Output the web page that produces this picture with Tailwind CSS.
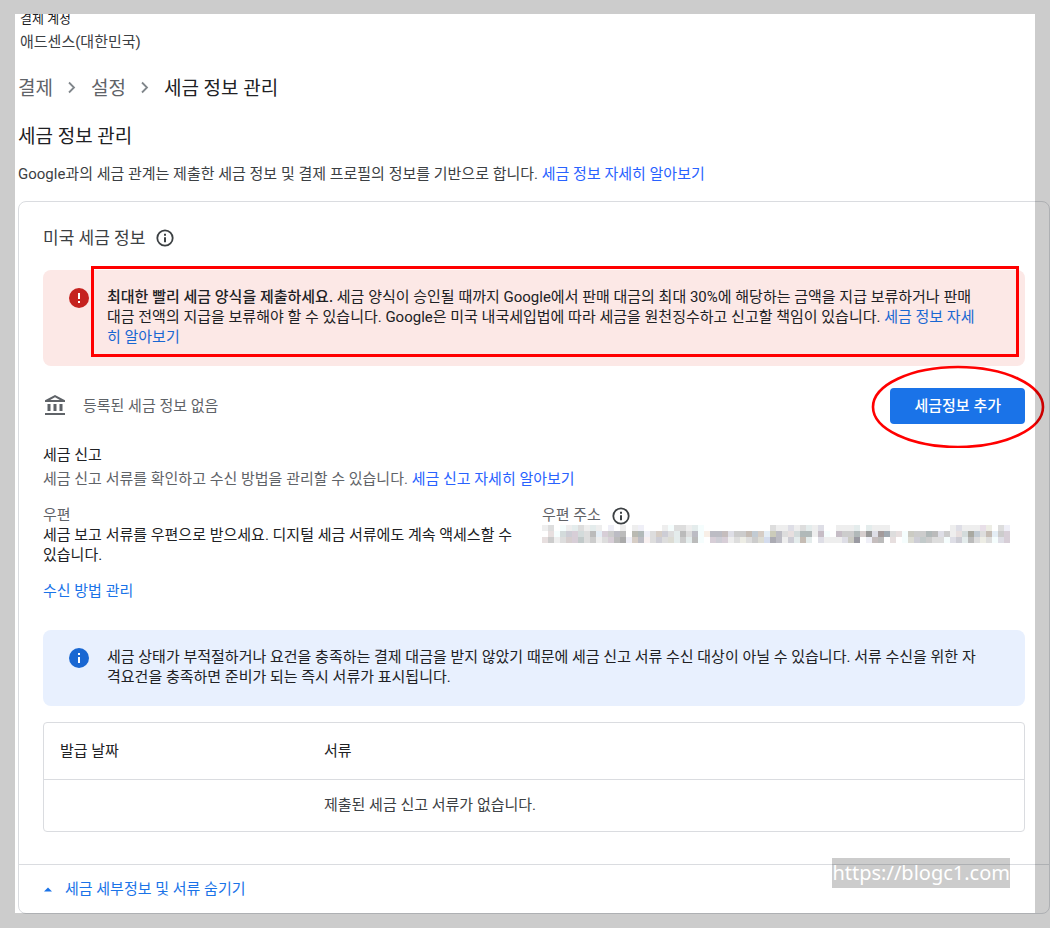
<!DOCTYPE html>
<html lang="ko">

<head>
  <meta charset="UTF-8" />
  <meta name="viewport" content="width=device-width, initial-scale=1.0" />
  <title>세금 정보 관리</title>
  <script src="https://cdn.jsdelivr.net/npm/@tailwindcss/browser@4"></script>
</head>

<body class="bg-white font-['Roboto','Noto_Sans_CJK_KR',sans-serif] text-[15px] leading-5 text-[#202124]">
  <div class="relative min-h-screen overflow-hidden pt-[14px] pb-[14px] pl-[18px]">

    <header class="overflow-hidden pl-[2px]">
      <p class="-mt-[5px] text-[13px]">결제 계정</p>
      <p class="mt-[3px] text-[#3c4043]">애드센스(대한민국)</p>
    </header>

    <nav aria-label="탐색경로" class="mt-[23px] flex items-center text-[19px] leading-7 text-[#5f6368]">
      <a href="#">결제</a>
      <svg class="mx-[7px] size-6" viewBox="0 0 24 24" fill="none" stroke="#80868b" stroke-width="1.8"><path d="M9 5.5l5 5-5 5" /></svg>
      <a href="#">설정</a>
      <svg class="mx-[7px] size-6" viewBox="0 0 24 24" fill="none" stroke="#80868b" stroke-width="1.8"><path d="M9 5.5l5 5-5 5" /></svg>
      <span class="text-[#202124]">세금 정보 관리</span>
    </nav>

    <h1 class="mt-5 text-[19px] leading-7">세금 정보 관리</h1>
    <p class="mt-[13px] text-[#3c4043]">Google과의 세금 관계는 제출한 세금 정보 및 결제 프로필의 정보를 기반으로 합니다. <a href="#" class="text-[#2962ff]">세금 정보 자세히 알아보기</a></p>

    <main class="mt-[17px] rounded-lg border border-[#dadce0]">
      <div class="px-6 pt-6">
        <div class="flex items-center gap-2">
          <h2 class="text-[17px] leading-6 text-[#3c4043]">미국 세금 정보</h2>
          <svg class="size-6" viewBox="0 0 24 24" fill="none"><circle cx="12" cy="12" r="7.7" stroke="#3c4043" stroke-width="1.8" /><path d="M11 7.8h2v2h-2zM11 11.2h2v5h-2z" fill="#3c4043" /></svg>
        </div>

        <div role="alert" class="relative mt-5 flex gap-4 rounded-lg bg-[#fce8e6] pt-4 pr-10 pb-[19px] pl-6">
          <svg class="size-6 shrink-0" viewBox="0 0 24 24"><circle cx="12" cy="12" r="10" fill="#c5221f" /><path d="M11 7h2v6h-2zM11 15h2v2h-2z" fill="#fff" /></svg>
          <p class="pt-px"><strong class="font-medium">최대한 빨리 세금 양식을 제출하세요.</strong> 세금 양식이 승인될 때까지 Google에서 판매 대금의 최대 30%에 해당하는 금액을 지급 보류하거나 판매 대금 전액의 지급을 보류해야 할 수 있습니다. Google은 미국 내국세입법에 따라 세금을 원천징수하고 신고할 책임이 있습니다. <a href="#" class="text-[#1967d2]">세금 정보 자세히 알아보기</a></p>
          <div class="absolute -top-1 right-[6px] bottom-[9px] left-12 border-3 border-[#ff0000]"></div>
        </div>

        <div class="mt-[22px] flex items-center gap-4 text-[#5f6368]">
          <svg class="size-6" viewBox="0 0 24 24" fill="#5f6368"><path d="M7.5 10H4.5V17h3zM13.5 10h-3V17h3zM22 19H2v2h20zM19.5 10h-3V17h3zM12 3.3L16.9 6H7.1zM12 1L2 6.3V8h20V6.3z" /></svg>
          <span>등록된 세금 정보 없음</span>
          <div class="relative ml-auto">
            <button type="button" class="h-9 rounded bg-[#1a73e8] px-6 font-medium text-white">세금정보 추가</button>
            <svg class="pointer-events-none absolute top-1/2 left-1/2 h-[84px] w-[174px] max-w-none -translate-x-1/2 -translate-y-1/2" viewBox="0 0 174 84" fill="none"><ellipse cx="87" cy="43" rx="85" ry="40" stroke="#ff0000" stroke-width="2.6" /></svg>
          </div>
        </div>

        <h3 class="mt-[21px]">세금 신고</h3>
        <p class="mt-1 text-[#5f6368]">세금 신고 서류를 확인하고 수신 방법을 관리할 수 있습니다. <a href="#" class="text-[#2962ff]">세금 신고 자세히 알아보기</a></p>

        <div class="mt-4 grid grid-cols-2 gap-4">
          <div>
            <p class="text-[#5f6368]">우편</p>
            <p>세금 보고 서류를 우편으로 받으세요. 디지털 세금 서류에도 계속 액세스할 수 있습니다.</p>
          </div>
          <div>
            <div class="flex h-5 items-center gap-2 text-[#5f6368]">
              <span>우편 주소</span>
              <svg class="size-6" viewBox="0 0 24 24" fill="none"><circle cx="12" cy="13" r="7.7" stroke="#3c4043" stroke-width="1.8" /><path d="M11 8.8h2v2h-2zM11 12.2h2v5h-2z" fill="#3c4043" /></svg>
            </div>
            <svg id="address" class="h-[18px] w-[468px] saturate-50" viewBox="0 0 78 3" shape-rendering="crispEdges" role="img" aria-label="가려진 주소"></svg>
          </div>
        </div>
        <a href="#" class="mt-4 inline-block text-[#1a73e8]">수신 방법 관리</a>

        <div class="mt-[29px] flex gap-4 rounded-lg bg-[#e8f0fe] pt-4 pr-10 pb-[19px] pl-6">
          <svg class="size-6 shrink-0" viewBox="0 0 24 24"><circle cx="12" cy="12" r="10" fill="#1967d2" /><path d="M11 7h2v2h-2zM11 11h2v6h-2z" fill="#fff" /></svg>
          <p class="pt-px">세금 상태가 부적절하거나 요건을 충족하는 결제 대금을 받지 않았기 때문에 세금 신고 서류 수신 대상이 아닐 수 있습니다. 서류 수신을 위한 자격요건을 충족하면 준비가 되는 즉시 서류가 표시됩니다.</p>
        </div>

        <div class="mt-4 rounded border border-[#dadce0]">
          <table class="w-full table-fixed text-left">
            <thead>
              <tr class="h-14 border-b border-[#dadce0]">
                <th class="w-[264px] pl-4 font-normal">발급 날짜</th>
                <th class="pl-4 font-normal">서류</th>
              </tr>
            </thead>
            <tbody>
              <tr class="h-[52px] text-[#3c4043]">
                <td class="pl-4"></td>
                <td class="pl-4">제출된 세금 신고 서류가 없습니다.</td>
              </tr>
            </tbody>
          </table>
        </div>
      </div>

      <div class="mt-8 border-t border-[#dadce0] px-6">
        <button type="button" class="flex h-12 items-center gap-3 text-[#1a73e8]">
          <svg class="h-[5px] w-[10px]" viewBox="0 0 10 5" fill="#1a73e8"><path d="M1 4.5L5 .5l4 4z" /></svg>
          세금 세부정보 및 서류 숨기기
        </button>
      </div>
    </main>

    <div class="pointer-events-none absolute inset-0 border-[15px] border-t-[14px] border-black/20"></div>
    <div class="absolute right-10 bottom-10 bg-black/20 font-['Noto_Sans',sans-serif] text-[20px] leading-[30px] text-white">https://blogc1.com</div>
  </div>

  <script>
    // masked postal address, one colour per block
    const rows = [
      "eee ddd fff eff eee dee ddd eee dee eee fff eef fff eee fff eee eef fff fff fff eee eff ddd ddd eee dee eff fff fff fff fff fff fff fff fff fff fff fff ddd eee eee dde eee ddd dee eee dde fff fff eee eee eee dee fff dee eee eee eee fff fff fff fff fff fff fff fff fff fff eee dde eee eee eee ede eed fff ddd eef",
      "fff edd eff cdd ccd dcd cdd ddd bbb def dcd ccc bbc bbb fff bba abb eef ddd dcb ccd ddd dee bbb ddd bbc eff fed bbc bbc cbb dde ccc ccc cba bcd dcb def cca bbc ddd edd cdd abb abb eee cbc eff fff cbc ccc ccc abb dcc 999 dde a99 9ab ddd edd eff ccb ccc ccc abb bbb dde ccc eee edd cdd aa9 bcd ddd cba def ccc dcd",
      "edd ccc eee ddd dcc dcd bcc ddd ccc eee ddd dcd bbb aaa eef dcb bbc fee ddd ccd ddd ddc dee ccc dee bbb eff fff dcd ccd dcd eee ddd eed ddd ccc ddc cdf aab bbc eee ccd dee cba dee fff dde eee eee eee dde ccb 99a fff eef cbb bbb fff edd fff eff ddc ccd bcc ccc ddd ddd eff dde ccd dee bbb ddd eed ddd eff dde dcd"
    ];
    const address = document.getElementById("address");
    rows.forEach((row, y) => {
      row.split(" ").forEach((color, x) => {
        const block = document.createElementNS("http://www.w3.org/2000/svg", "rect");
        block.setAttribute("x", x);
        block.setAttribute("y", y);
        block.setAttribute("width", 1);
        block.setAttribute("height", 1);
        block.setAttribute("fill", "#" + color);
        address.appendChild(block);
      });
    });
  </script>
</body>

</html>
